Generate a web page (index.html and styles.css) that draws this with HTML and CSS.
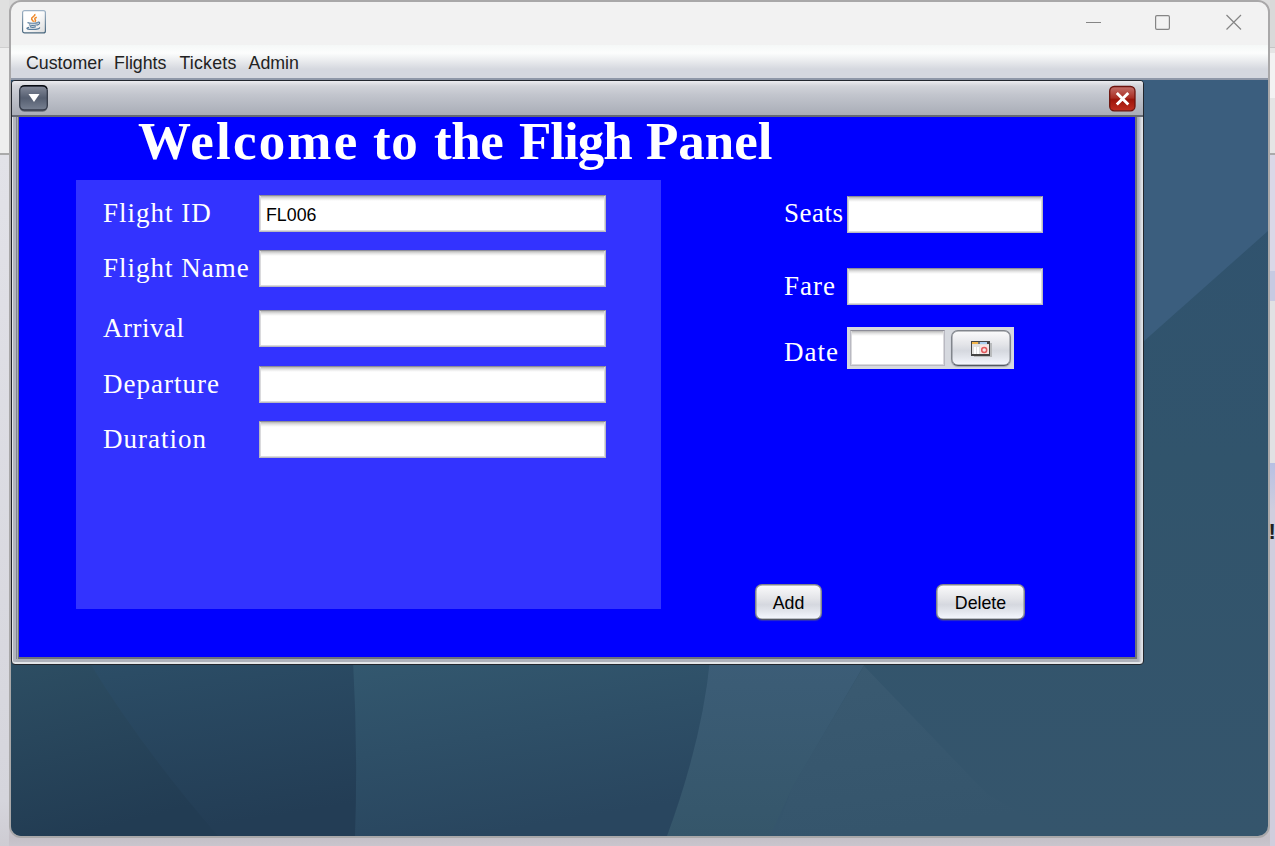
FILE: index.html
```html
<!DOCTYPE html>
<html lang="en">
<head>
<meta charset="utf-8">
<title>Flight Panel</title>
<link rel="stylesheet" href="styles.css">
</head>
<body>
<div class="screen">
  <div class="edge edge-left"></div>
  <div class="window">
    <header class="titlebar">
      <svg class="java" width="24" height="24" viewBox="0 0 24 24">
        <defs><linearGradient id="jb" x1="0" y1="0" x2="0" y2="1"><stop offset="0" stop-color="#9fb3c6"/><stop offset="1" stop-color="#4a687f"/></linearGradient>
        <linearGradient id="jf" x1="0" y1="0" x2="1" y2="1"><stop offset=".4" stop-color="#fff"/><stop offset="1" stop-color="#dcdcdc"/></linearGradient></defs>
        <rect x=".6" y=".6" width="22.8" height="22.3" rx="2" fill="url(#jf)" stroke="url(#jb)" stroke-width="1.2"/>
        <path d="M12.800 4c1.200 2.500-3.800 2.500-3.200 5 .2 1 1.600 1.500 1.900 2.800M14.800 7.200c-2.500.8-2.400 1.800-1.500 2.700.5.600.2 1.300-.6 1.900" fill="none" stroke="#ee8a2c" stroke-width="1.500"/>
        <path d="M5.500 12.500c1.500 1 8.500 1 10.300.1M7 14.700c1.500.8 6 .8 7.800 0M7.800 16.600c1.500.7 4.500.7 6 0M15.800 12.200c2.700-.6 2.400 2.300-.8 3M7 17.400c-4.500 1.200-1 2 3.500 2s8-.9 6.900-2" fill="none" stroke="#587c9c" stroke-width="1.200"/>
      </svg>
      <svg class="controls" width="156" height="16" viewBox="0 0 156 16" fill="none" stroke="#858585" stroke-width="1.200">
        <path d="M0 8.500h15"/><rect x="69.600" y="1.600" width="13.800" height="13.800" rx="1.300"/><path d="M140.500 1l14.500 14.500M155 1l-14.500 14.500"/>
      </svg>
    </header>
    <nav class="menubar"><span>Customer</span><span>Flights</span><span>Tickets</span><span>Admin</span></nav>
    <main class="desktop">
      <svg class="wallpaper" width="1257" height="756" viewBox="11 80 1257 756">
        <defs>
          <linearGradient id="a" x1="0" y1="0" x2=".3" y2="1"><stop offset="0" stop-color="#2d4e63"/><stop offset="1" stop-color="#223c53"/></linearGradient>
          <linearGradient id="b" x1="0" y1="0" x2=".25" y2="1"><stop offset="0" stop-color="#2c4e67"/><stop offset="1" stop-color="#233d55"/></linearGradient>
          <linearGradient id="c" x1="0" y1="0" x2=".35" y2="1"><stop offset="0" stop-color="#33586f"/><stop offset="1" stop-color="#29465f"/></linearGradient>
          <linearGradient id="d" x1="0" y1="0" x2="0" y2="1"><stop offset="0" stop-color="#3c5d77"/><stop offset="1" stop-color="#35566a"/></linearGradient>
          <linearGradient id="e" x1="0" y1="0" x2=".2" y2="1"><stop offset="0" stop-color="#3a5a71"/><stop offset="1" stop-color="#35556c"/></linearGradient>
          <linearGradient id="f" x1="0" y1="0" x2="0" y2="1"><stop offset="0" stop-color="#30526f"/><stop offset=".5" stop-color="#31546c"/><stop offset="1" stop-color="#35556c"/></linearGradient>
        </defs>
        <rect x="11" y="80" width="1257" height="756" fill="url(#f)"/>
        <path d="M1143 80h125v151L1143 342z" fill="#3b5e7e"/>
        <path d="M705 660H867L792 788 770 836H660z" fill="url(#d)"/>
        <path d="M864 666L792 788 775 836H1060L987 794z" fill="url(#e)"/>
        <path d="M340 660H710Q702 741 667 836H340z" fill="url(#c)"/>
        <path d="M80 660H353Q358 750 355 836H200z" fill="url(#b)"/>
        <path d="M11 660H88Q140 746 218 836H11z" fill="url(#a)"/>
      </svg>
      <section class="frame">
        <div class="frame-title">
          <svg width="30" height="28" viewBox="0 0 30 28">
            <defs><linearGradient id="mb" x1="0" y1="0" x2="0" y2="1"><stop offset="0" stop-color="#858b9a"/><stop offset=".5" stop-color="#555e70"/><stop offset="1" stop-color="#788192"/></linearGradient></defs>
            <rect x="1.500" y="2" width="28" height="25" rx="5" fill="#777d88"/>
            <rect x="1.700" y="1" width="27.600" height="24" rx="4.500" fill="url(#mb)" stroke="#343a48" stroke-width="1.300"/>
            <path d="M3 2.200Q4 .7 7 .7h17q4 0 5 3" fill="none" stroke="#090c12" stroke-width="1.300"/>
            <path d="M10.500 9h11L16 17z" fill="#fff"/>
          </svg>
          <svg width="27" height="27" viewBox="0 0 27 27">
            <defs><linearGradient id="cb" x1="0" y1="0" x2="0" y2="1"><stop offset="0" stop-color="#c4706a"/><stop offset=".48" stop-color="#a92c22"/><stop offset=".52" stop-color="#9b1409"/><stop offset="1" stop-color="#c02d20"/></linearGradient></defs>
            <rect x=".7" y="1.500" width="25.300" height="24.300" rx="4.500" fill="url(#cb)" stroke="#6c130d" stroke-width="1.300"/>
            <path d="M7.800 8l11.500 11.500M19.300 8L7.800 19.500" stroke="#fff" stroke-width="2.900"/>
          </svg>
        </div>
        <div class="content">
          <h1><span class="w1">Welcome</span> <span>to</span> <span class="w3">the</span> <span class="w4">Fligh</span> <span class="w5">Panel</span></h1>
          <div class="columns">
            <div class="card">
              <label class="row"><span>Flight ID</span><input type="text" value="FL006"></label>
              <label class="row"><span>Flight Name</span><input type="text"></label>
              <label class="row gap-wide"><span class="snug">Arrival</span><input type="text"></label>
              <label class="row"><span>Departure</span><input type="text"></label>
              <label class="row"><span>Duration</span><input type="text"></label>
            </div>
            <div class="side">
              <label class="row"><span class="snug">Seats</span><input type="text"></label>
              <label class="row"><span>Fare</span><input type="text"></label>
              <div class="row date-row"><span>Date</span>
                <div class="picker"><input type="text"><button class="calendar">
                  <svg width="22" height="16" viewBox="0 0 22 16">
                    <path d="M3 2h18v14H3z" fill="#b9bbbd"/><path d="M0 0h19v15H0z" fill="#444"/><path d="M1 1h6v2H1z" fill="#f3b64b"/><path d="M7 1h2v2H7z" fill="#777"/><path d="M9 1h7v2H9z" fill="#a9cdf0"/><path d="M1 3h17v10H1z" fill="#e1e1e1"/><path d="M3 6h2v7H3zM6 6h2v7H6z" fill="#fff"/><path d="M9 4h9v9H9z" fill="#f6e5e5"/><circle cx="13.200" cy="9" r="2.500" fill="none" stroke="#e05a5e" stroke-width="1.500"/>
                  </svg></button></div>
              </div>
              <div class="actions"><button class="add">Add</button><button class="delete">Delete</button></div>
            </div>
          </div>
        </div>
      </section>
    </main>
  </div>
  <div class="edge edge-right"><span>!</span></div>
</div>
</body>
</html>
```
FILE: styles.css
```css
* { box-sizing: border-box; }
body { margin: 0; overflow: hidden; font-family: "Liberation Sans", Arial, sans-serif; }
.screen {
  display: grid;
  grid-template-columns: 9px 1261px 5px;
  width: 1275px;
  height: 846px;
  background: linear-gradient(#dcdcdc 0 20px, #d5d4d9 30px 800px, #c4c0c7 838px, #c9c5cd);
}
.edge-left { background: linear-gradient(#e0e0e0 0 47px, #cfcfcf 47px 48px, #eee 48px 153px, #aaa 153px 155px, #e2e2e8 155px, #d5d5dc 800px, #ceccd3); }
.edge-right {
  display: flex;
  padding-top: 521px;
  background: linear-gradient(#d9d9d9 0 47px, #c5c5c5 47px 48px, #e5e5e5 48px 53px, #f3f3f3 53px 98px, #e5e5e5 98px 153px, #aaa 153px 155px, #dad8e7 155px 271px, #c7cae2 271px 301px, #e1e1e3 301px 463px, #b7c0e3 463px, #d0cede 510px, #d0cedd);
}
.edge-right span { font-weight: bold; font-size: 22px; line-height: 22px; color: #222; margin-left: -1.500px; }
.window {
  height: 838px;
  border: 2px solid #a9a8a9;
  border-radius: 12px;
  overflow: hidden;
  display: flex;
  flex-direction: column;
}
.titlebar {
  height: 43px;
  background: #f2f2f2;
  display: flex;
  justify-content: space-between;
  padding: 8px 26px 0 11px;
}
.controls { margin-top: 4px; }
.menubar {
  height: 35px;
  display: flex;
  gap: 12px;
  padding: 7px 0 0 15px;
  font-size: 17.800px;
  line-height: 22px;
  color: #222;
  background: linear-gradient(#f5f8f7, #fcfdfd 8px, #e7e9ec 17px, #d5d8df 24px, #d5d8df 33px, #8f98a8 33px);
}
.menubar span:nth-child(2) { margin-left: -1px; }
.menubar span:nth-child(3) { margin-left: 1px; letter-spacing: .2px; }
.desktop { height: 756px; position: relative; overflow: hidden; }
.wallpaper { position: absolute; left: 0; top: 0; }
.frame {
  position: relative;
  width: 1133px;
  height: 585px;
  border: 1px solid #22262d;
  border-radius: 4px;
  background:
    linear-gradient(#adb1ba, #adb1ba) 4px 100% / 1122px 5px no-repeat,
    linear-gradient(90deg, #e1e3e7 0 1px, #b2b5be 1px 4px, #848891 4px 5px, #a9adb5 5px 6px, #686c75 6px 7px, #adb1ba 7px 1116px, #7a7e86 1123px, #9a9ea6 1124px, #b5b8c0 1127px, #e0e3e8 1130px);
  box-shadow: inset 0 -2px 0 #e2e5e8;
}
.frame-title {
  height: 36px;
  display: flex;
  justify-content: space-between;
  padding: 4px 7px 0 6px;
  border-radius: 3px 3px 0 0;
  background: linear-gradient(#ececef, #d1d3d9 5px, #c2c5cd 14px, #a9adb7 34px, #656a73 34px);
}
.content {
  width: 1119px;
  height: 542px;
  margin-left: 6px;
  border: solid #6d727b;
  border-width: 0 2px 2px 1px;
  background: #00f;
  color: #fff;
}
h1 {
  display: grid;
  grid-template-columns: 235px 61px 85px 127px auto;
  margin: 0;
  padding-left: 119px;
  height: 63px;
  font: bold 53px/48px "Liberation Serif", serif;
  letter-spacing: .55px;
  white-space: nowrap;
}
.w1 { letter-spacing: 2.200px; }
.w3 { letter-spacing: -.5px; }
.w4 { letter-spacing: -1px; }
.w5 { letter-spacing: 0; }
.columns { display: flex; gap: 94px; padding-left: 57px; }
.card {
  width: 585px;
  height: 429px;
  padding: 15px 0 0 26px;
  background: #33f;
}
.card .row { display: grid; grid-template-columns: 157px 347px; margin-bottom: 18px; }
.card .gap-wide { margin: 23px 0 19px; }
.row span { padding-left: 1px; font: 27px/36px "Liberation Serif", serif; letter-spacing: 1px; }
.row .snug { letter-spacing: .5px; }
input {
  width: 100%;
  height: 37px;
  padding: 3px 6px 0;
  border: 1px solid;
  border-color: #8d8d98 #b9b9c2 #b9b9c2;
  border-radius: 0;
  outline: 0;
  background: linear-gradient(#b5b5b5, #dedede 2px, #f6f6f6 4px, #fff 5px);
  box-shadow: inset 1px -1px 0 #dadadd, inset -1px 0 0 #dadadd;
  color: #000;
  font: 17.800px "Liberation Sans", Arial, sans-serif;
}
.side { padding-top: 16px; width: 300px; }
.side .row { display: grid; grid-template-columns: 64px 196px; margin: 0 0 35px 28px; }
.side .row .snug { margin-top: -1px; }
.side .date-row { grid-template-columns: 64px 167px; margin: -13px 0 0 28px; }
.side .date-row span { margin-top: 7px; }
.picker {
  height: 42px;
  padding: 3px;
  display: grid;
  grid-template-columns: 95px 60px;
  gap: 6px;
  background: #d6d9df;
}
.picker input { height: 36px; }
button {
  height: 36px;
  padding: 2px 0 0;
  border: 1.500px solid #81858c;
  border-bottom-color: #535862;
  border-radius: 7px;
  background: linear-gradient(#fbfbfc, #e3e4e8 40%, #d5d8df 58%, #e3e6ed 78%, #f5f8ff);
  box-shadow: 0 1px 1px #666b7570, inset 0 0 0 .5px #81858c;
  color: #000;
  font: 17.800px "Liberation Sans", Arial, sans-serif;
}
.calendar { display: grid; place-items: center; padding: 1px 0 0; }
.calendar svg { margin-left: 1px; }
.actions { display: flex; gap: 114px; margin-top: 214px; }
.add { width: 67px; }
.delete { width: 89px; }
```
